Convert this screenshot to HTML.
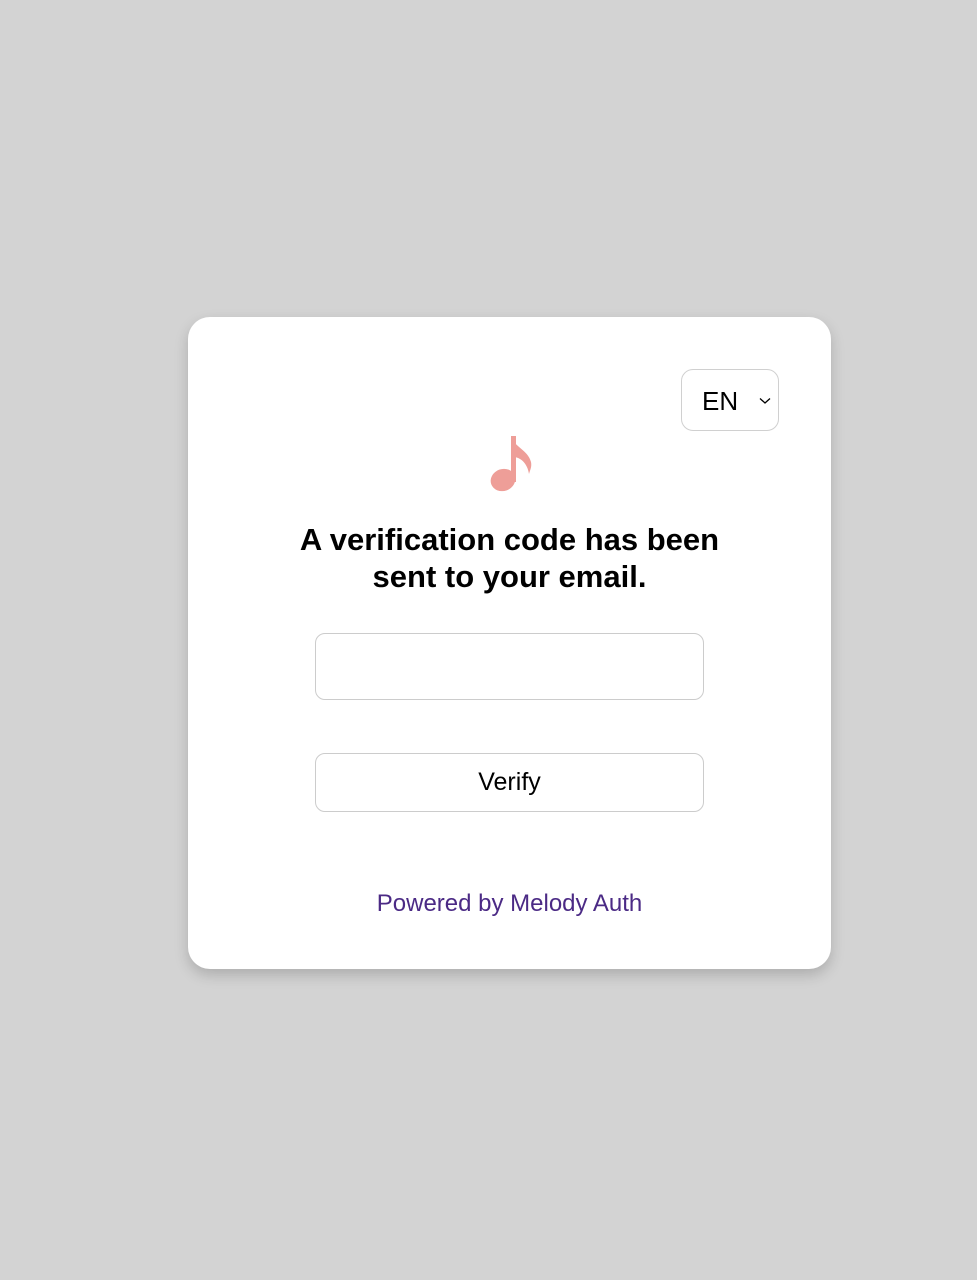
<!DOCTYPE html>
<html><head><meta charset="utf-8"><style>
html,body{margin:0;padding:0;background:#d3d3d3;width:977px;height:1280px;overflow:hidden;font-family:"Liberation Sans",sans-serif}
.card{position:absolute;left:188px;top:317px;width:643px;height:652px;background:#fff;border-radius:22px;box-shadow:0 6px 14px rgba(0,0,0,0.18)}
.sel{position:absolute;left:493px;top:52px;width:98px;height:62px;border:1.5px solid #d0d0d0;border-radius:12px;box-sizing:border-box}
.sel span{position:absolute;left:20px;top:16px;font-size:26px;color:#000}
.sel svg{position:absolute;left:77px;top:27px}
.note{position:absolute;left:300px;top:117px}
h1{position:absolute;left:0;width:643px;top:204px;margin:0;text-align:center;font-size:31px;line-height:37px;font-weight:bold;color:#000}
.inp{position:absolute;left:127px;top:316px;width:389px;height:67px;border:1.5px solid #ccc;border-radius:10px;box-sizing:border-box}
.btn{position:absolute;left:127px;top:436px;width:389px;height:59px;border:1.5px solid #ccc;border-radius:10px;box-sizing:border-box;text-align:center;line-height:56px;font-size:25px;color:#000}
.pw{position:absolute;left:0;width:643px;top:573px;text-align:center;font-size:24px;color:#4b2a85}
</style></head><body>
<div class="card">
<div class="sel"><span>EN</span><svg width="12" height="8" viewBox="0 0 12 8"><path d="M1 1.5 L6 6 L11 1.5" fill="none" stroke="#000" stroke-width="1.3"/></svg></div>
<svg class="note" width="50" height="60" viewBox="300 117 50 60" style="left:300px">
<g fill="#ee9e98">
<ellipse cx="315" cy="163" rx="12.5" ry="11" transform="rotate(-20 315 163)"/>
<rect x="323" y="119" width="5" height="46"/>
<path d="M323 119 C326 130 340 133 343 145 C344 150 342 153 341 157 C340 150 336 142 327 140 Z"/>
</g></svg>
<h1>A verification code has been<br>sent to your email.</h1>
<div class="inp"></div>
<div class="btn">Verify</div>
<div class="pw">Powered by Melody Auth</div>
</div>
</body></html>
